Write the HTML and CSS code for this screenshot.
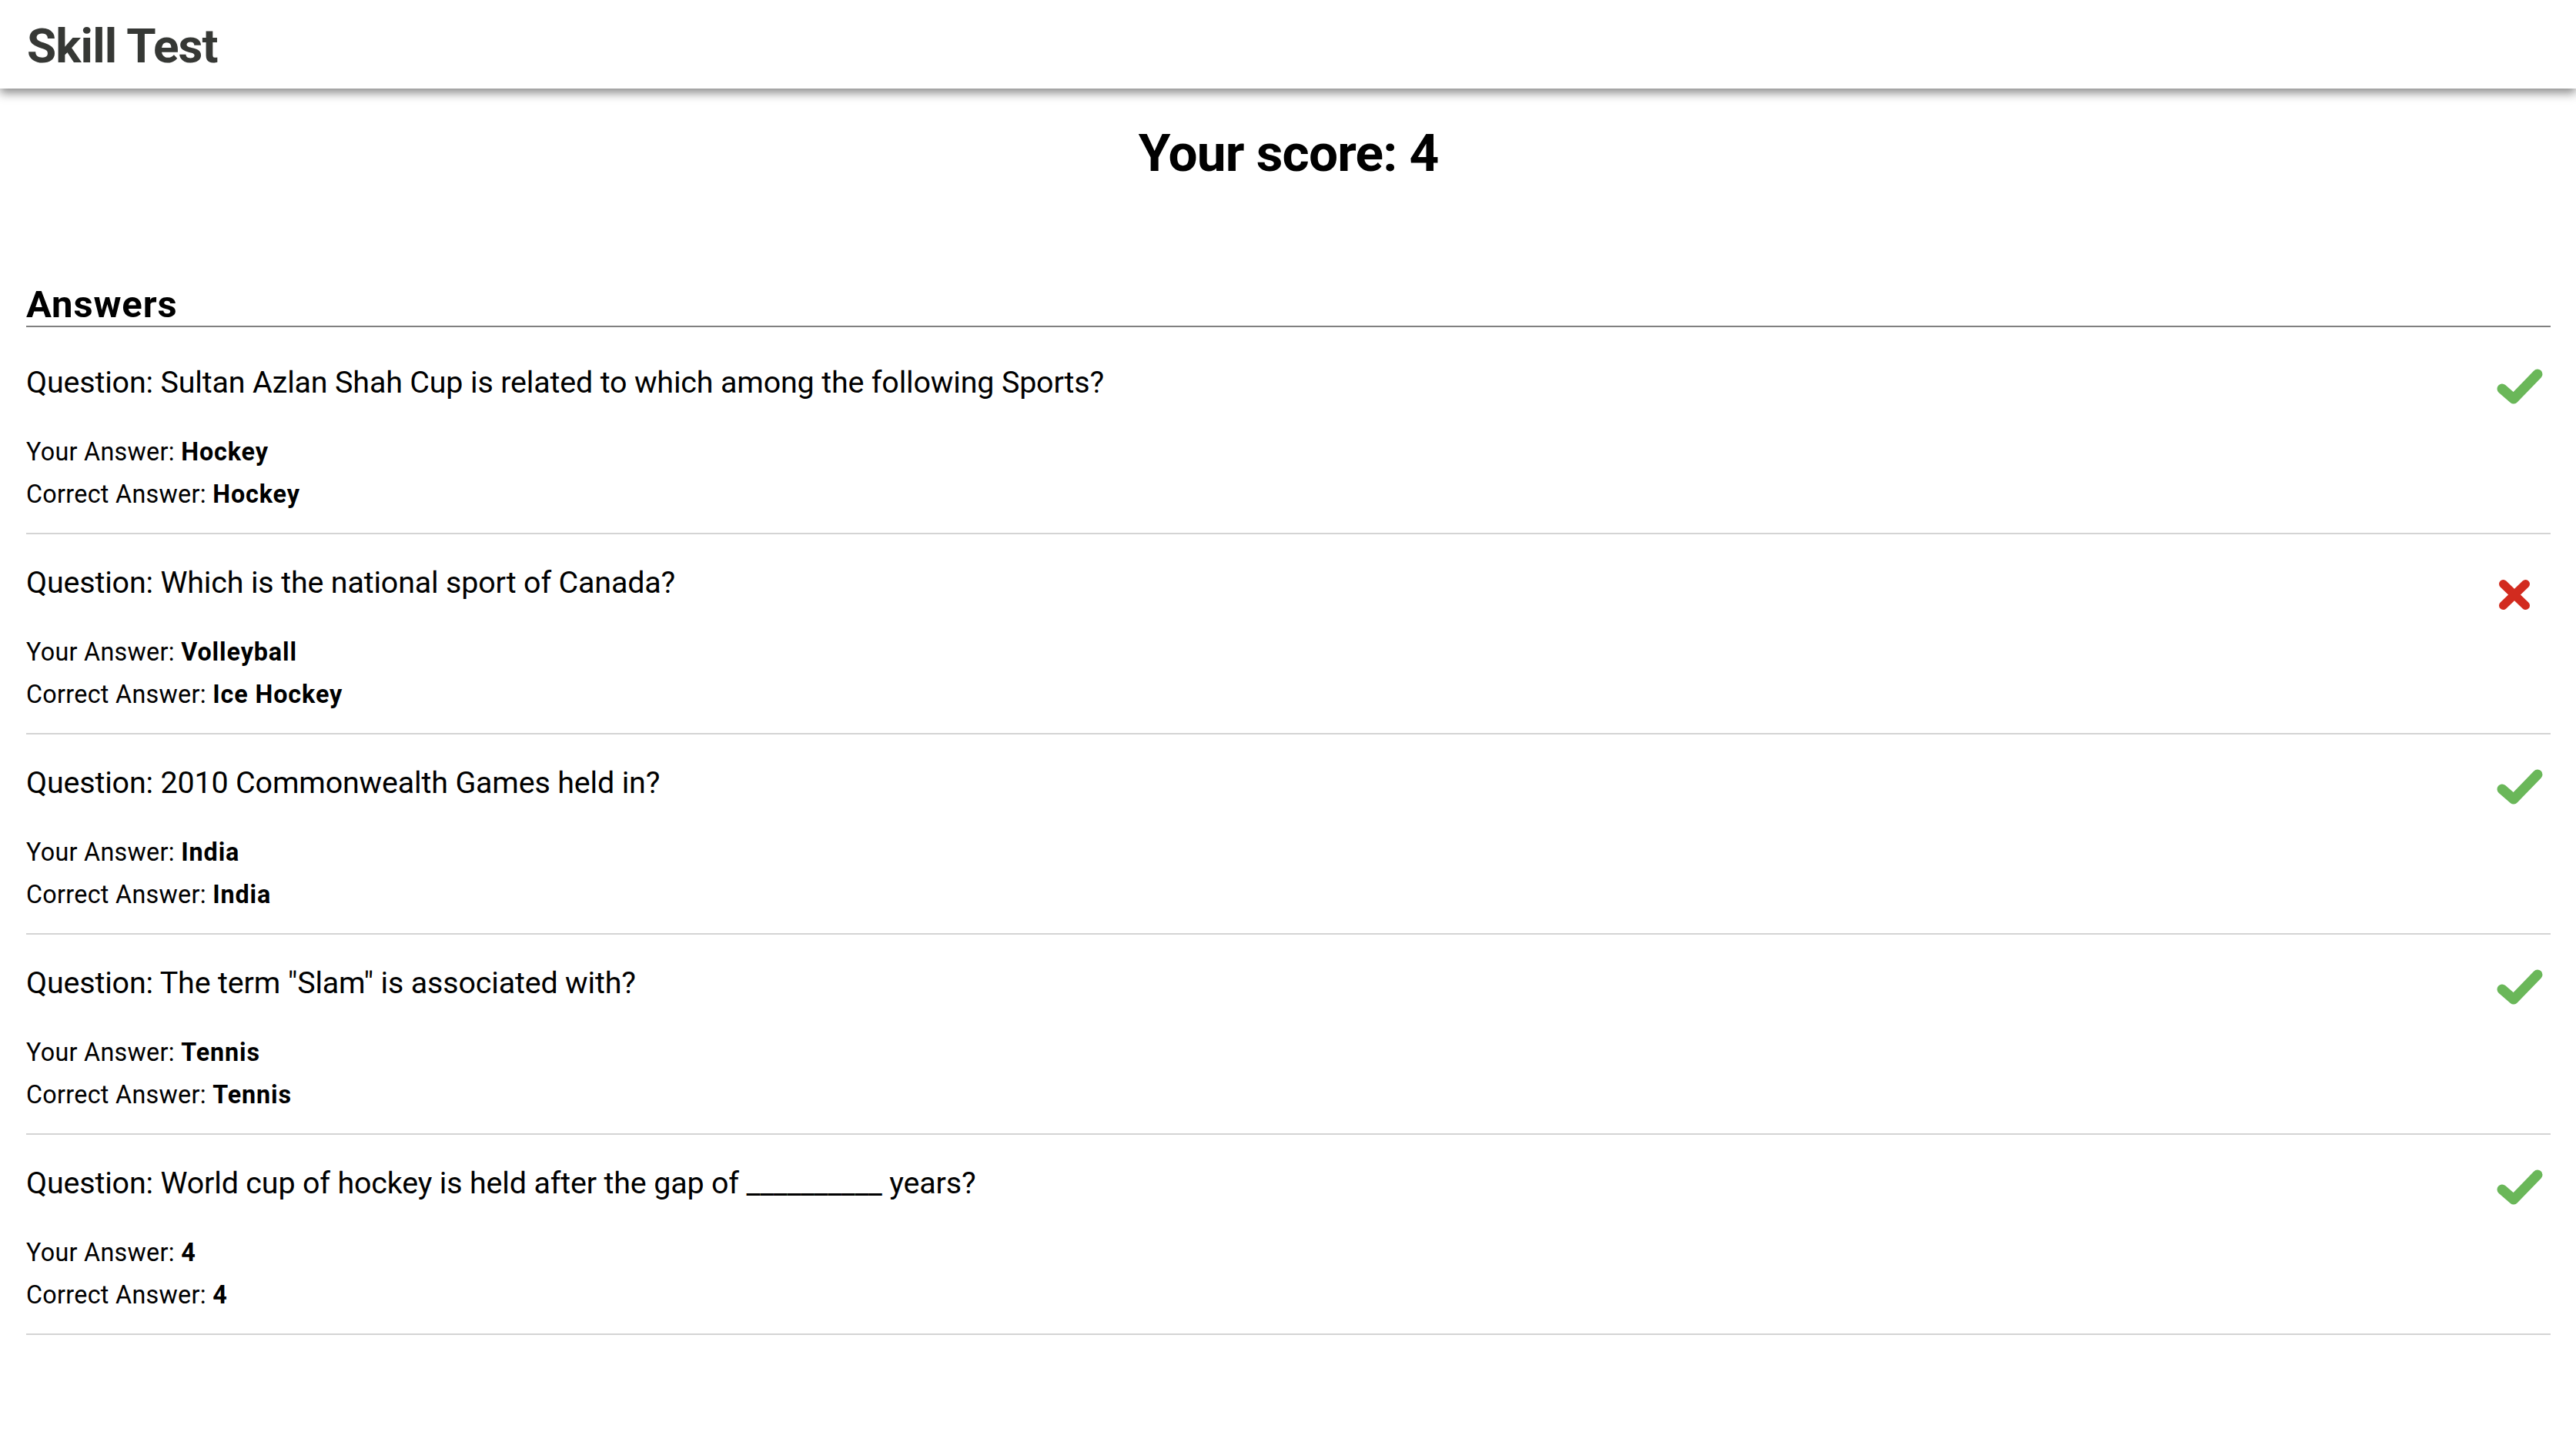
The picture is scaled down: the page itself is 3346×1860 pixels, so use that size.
FILE: index.html
```html
<!DOCTYPE html>
<html lang="en">
<head>
<meta charset="utf-8">
<title>Skill Test</title>
<link rel="stylesheet" href="styles.css">
</head>
<body>
<header class="topbar">
  <h1 class="brand">Skill Test</h1>
</header>
<main class="page">
  <h2 class="score">Your score: 4</h2>
  <section class="answers">
    <h3 class="answers-title">Answers</h3>
    <ul class="answer-list">
      <li class="answer-item">
        <div class="answer-body">
          <p class="question">Question: Sultan Azlan Shah Cup is related to which among the following Sports?</p>
          <p class="line">Your Answer: <b>Hockey</b></p>
          <p class="line">Correct Answer: <b>Hockey</b></p>
        </div>
        <svg class="status" viewBox="0 0 70 60" width="70" height="60"><polyline class="check" points="7,26 22,39 53,7"/></svg>
      </li>
      <li class="answer-item">
        <div class="answer-body">
          <p class="question">Question: Which is the national sport of Canada?</p>
          <p class="line">Your Answer: <b>Volleyball</b></p>
          <p class="line">Correct Answer: <b>Ice Hockey</b></p>
        </div>
        <svg class="status" viewBox="0 0 70 60" width="70" height="60"><path class="cross" d="M8.5 19.5 L37.5 47.5 M37.5 19.5 L8.5 47.5"/></svg>
      </li>
      <li class="answer-item">
        <div class="answer-body">
          <p class="question">Question: 2010 Commonwealth Games held in?</p>
          <p class="line">Your Answer: <b>India</b></p>
          <p class="line">Correct Answer: <b>India</b></p>
        </div>
        <svg class="status" viewBox="0 0 70 60" width="70" height="60"><polyline class="check" points="7,26 22,39 53,7"/></svg>
      </li>
      <li class="answer-item">
        <div class="answer-body">
          <p class="question">Question: The term "Slam" is associated with?</p>
          <p class="line">Your Answer: <b>Tennis</b></p>
          <p class="line">Correct Answer: <b>Tennis</b></p>
        </div>
        <svg class="status" viewBox="0 0 70 60" width="70" height="60"><polyline class="check" points="7,26 22,39 53,7"/></svg>
      </li>
      <li class="answer-item">
        <div class="answer-body">
          <p class="question">Question: World cup of hockey is held after the gap of __________ years?</p>
          <p class="line">Your Answer: <b>4</b></p>
          <p class="line">Correct Answer: <b>4</b></p>
        </div>
        <svg class="status" viewBox="0 0 70 60" width="70" height="60"><polyline class="check" points="7,26 22,39 53,7"/></svg>
      </li>
    </ul>
  </section>
</main>
</body>
</html>
```

FILE: styles.css
```css
html, body {
  margin: 0;
  padding: 0;
  background: #ffffff;
}

body {
  font-family: Roboto, "Noto Sans", "Liberation Sans", sans-serif;
  color: #000000;
}

.topbar {
  height: 115px;
  box-sizing: border-box;
  padding: 5px 35px 0;
  background: #ffffff;
  box-shadow: 0 6px 12px rgba(0, 0, 0, 0.45);
  position: relative;
  z-index: 1;
}

.brand {
  margin: 0;
  font-size: 62px;
  line-height: 110px;
  font-weight: 700;
  letter-spacing: -0.85px;
  color: #363835;
}

.page {
  padding: 0 33px 0 34px;
}

.score {
  margin: 43.5px 0 0;
  font-size: 67.5px;
  line-height: 79px;
  font-weight: 700;
  letter-spacing: -0.8px;
  text-align: center;
}

.answers {
  margin-top: 131.7px;
}

.answers-title {
  margin: 0;
  font-size: 49px;
  line-height: 54px;
  font-weight: 700;
  letter-spacing: 0.9px;
  border-bottom: 2px solid #808080;
}

.answer-list {
  list-style: none;
  margin: 0;
  padding: 8.8px 0 0;
}

.answer-item {
  display: flex;
  justify-content: space-between;
  align-items: flex-start;
  padding: 40.5px 0 21.5px;
  border-bottom: 2px solid #d4d4d4;
}

.answer-body {
  flex: 1;
}

.question {
  margin: 0 0 40px;
  font-size: 39.4px;
  line-height: 46px;
  letter-spacing: -0.15px;
}

.line {
  margin: 0;
  font-size: 32.3px;
  line-height: 55px;
  letter-spacing: 0.3px;
}

.line b {
  font-weight: 700;
  letter-spacing: 0.9px;
}

.status {
  flex: none;
  margin-top: 4.5px;
  fill: none;
  stroke-linecap: round;
  stroke-linejoin: round;
}

.check {
  stroke: #6ab759;
  stroke-width: 13;
}

.cross {
  stroke: #d22b1f;
  stroke-width: 11;
}
```
